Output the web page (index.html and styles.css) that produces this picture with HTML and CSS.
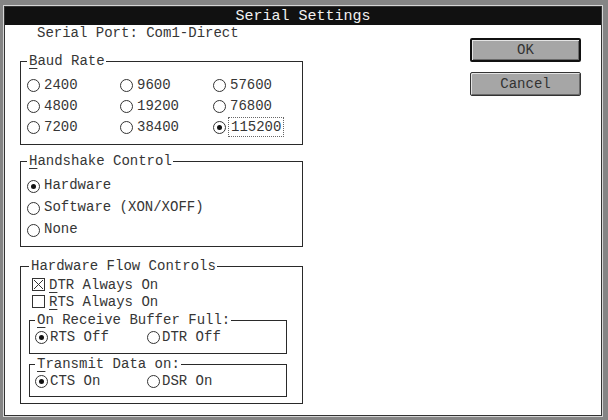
FILE: index.html
```html
<!DOCTYPE html>
<html lang="en">
<head>
  <meta charset="UTF-8" />
  <title>Serial Settings</title>
  <link rel="stylesheet" href="styles.css">
</head>
<body>

  <div class="window">
    <div class="titlebar">Serial Settings</div>

    <div class="content">
      <div class="left">
        <div class="port">Serial Port: Com1-Direct</div>

        <fieldset class="group baud">
          <legend><u>B</u>aud Rate</legend>
          <div class="grid3">
            <label class="opt"><span class="radio"></span>2400</label>
            <label class="opt"><span class="radio"></span>9600</label>
            <label class="opt"><span class="radio"></span>57600</label>
            <label class="opt"><span class="radio"></span>4800</label>
            <label class="opt"><span class="radio"></span>19200</label>
            <label class="opt"><span class="radio"></span>76800</label>
            <label class="opt"><span class="radio"></span>7200</label>
            <label class="opt"><span class="radio"></span>38400</label>
            <label class="opt"><span class="radio on"></span><span class="focus">115200</span></label>
          </div>
        </fieldset>

        <fieldset class="group handshake">
          <legend><u>H</u>andshake Control</legend>
          <label class="opt"><span class="radio on"></span>Hardware</label>
          <label class="opt"><span class="radio"></span>Software (XON/XOFF)</label>
          <label class="opt"><span class="radio"></span>None</label>
        </fieldset>

        <fieldset class="group flow">
          <legend>Hardware Flow Controls</legend>
          <label class="check">
            <svg width="13" height="13" viewBox="0 0 13 13"><rect x="0.5" y="0.5" width="12" height="12" fill="none" stroke="#333"/><path d="M2 2L11 11M11 2L2 11" stroke="#333"/></svg>
            <span><u>D</u>TR Always On</span>
          </label>
          <label class="check">
            <svg width="13" height="13" viewBox="0 0 13 13"><rect x="0.5" y="0.5" width="12" height="12" fill="none" stroke="#333"/></svg>
            <span><u>R</u>TS Always On</span>
          </label>

          <fieldset class="group inner receive">
            <legend><u>O</u>n Receive Buffer Full:</legend>
            <div class="grid2">
              <label class="opt"><span class="radio on"></span>RTS Off</label>
              <label class="opt"><span class="radio"></span>DTR Off</label>
            </div>
          </fieldset>

          <fieldset class="group inner transmit">
            <legend><u>T</u>ransmit Data on:</legend>
            <div class="grid2">
              <label class="opt"><span class="radio on"></span>CTS On</label>
              <label class="opt"><span class="radio"></span>DSR On</label>
            </div>
          </fieldset>
        </fieldset>
      </div>

      <div class="buttons">
        <button class="btn default">OK</button>
        <button class="btn">Cancel</button>
      </div>
    </div>
  </div>

</body>
</html>
```

FILE: styles.css
```css
* {
  box-sizing: border-box;
}
html, body {
  margin: 0;
  height: 420px;
}
body {
  background: #858585;
  padding: 5px 5px 3px 3px;
  font-family: 'Liberation Mono', 'DejaVu Sans Mono', monospace;
  font-size: 14px;
  line-height: 16px;
  color: #363636;
}
.window {
  height: 100%;
  border: 1px solid #d6d6d6;
  background: #fff;
  box-shadow: inset 0 0 0 1px #333;
  padding: 1px;
  display: flex;
  flex-direction: column;
}
.titlebar {
  height: 18px;
  background: #111;
  color: #f2f2f2;
  font-size: 15px;
  line-height: 19px;
  text-align: center;
}
.content {
  display: flex;
  padding-left: 15px;
}
.left {
  width: 283px;
}
.port {
  margin-left: 17px;
}
u {
  text-decoration: underline;
  text-underline-offset: 3px;
  text-decoration-thickness: 1px;
}

/* group boxes */
.group {
  margin: 0;
  border: 1px solid #2a2a2a;
  min-width: 0;
  padding: 0 0 0 6px;
}
.group legend {
  padding: 0 1px 0 2px;
  line-height: 16px;
}
.baud {
  margin-top: 12px;
  padding-top: 5px;
  padding-bottom: 7px;
}
.handshake {
  margin-top: 8px;
  padding-top: 5px;
  padding-bottom: 6px;
}
.handshake .opt {
  height: 22px;
}
.flow {
  margin-top: 11px;
  padding: 2px 0 6px 8px;
}
.inner {
  width: 258px;
  margin-top: 2px;
  padding-left: 5px;
}
.receive {
  padding-bottom: 8px;
}
.transmit {
  padding-bottom: 7px;
}
.inner .opt {
  height: 17px;
  gap: 2px;
}

.grid3 {
  display: grid;
  grid-template-columns: 93px 93px 1fr;
}
.grid2 {
  display: grid;
  grid-template-columns: 112px 1fr;
}

/* radio buttons and check boxes */
.opt {
  display: flex;
  align-items: center;
  gap: 4px;
  height: 21px;
}
.radio {
  position: relative;
  width: 13px;
  height: 13px;
  margin-top: 2px;
  border: 1px solid #333;
  border-radius: 50%;
  flex: none;
}
.radio.on::after {
  content: "";
  position: absolute;
  left: 3px;
  top: 3px;
  width: 5px;
  height: 5px;
  border-radius: 50%;
  background: #111;
}
.focus {
  outline: 1px dotted #666;
  outline-offset: 1px;
  padding: 0 1px;
}
.check {
  display: flex;
  align-items: center;
  gap: 4px;
  height: 17px;
  margin-left: 3px;
}
.check svg {
  flex: none;
}

/* dialog buttons */
.buttons {
  margin-left: auto;
  margin-right: 20px;
  padding-top: 13px;
  display: flex;
  flex-direction: column;
  gap: 10px;
}
.btn {
  width: 111px;
  height: 24px;
  background: #a6a6a6;
  border: 1px solid #333;
  border-radius: 2px;
  box-shadow: inset 1px 1px #e4e4e4, inset -1px -1px #6a6a6a;
  font-family: inherit;
  font-size: 14px;
  color: #333;
  padding: 0;
}
.btn.default {
  border: 2px solid #111;
}
```
